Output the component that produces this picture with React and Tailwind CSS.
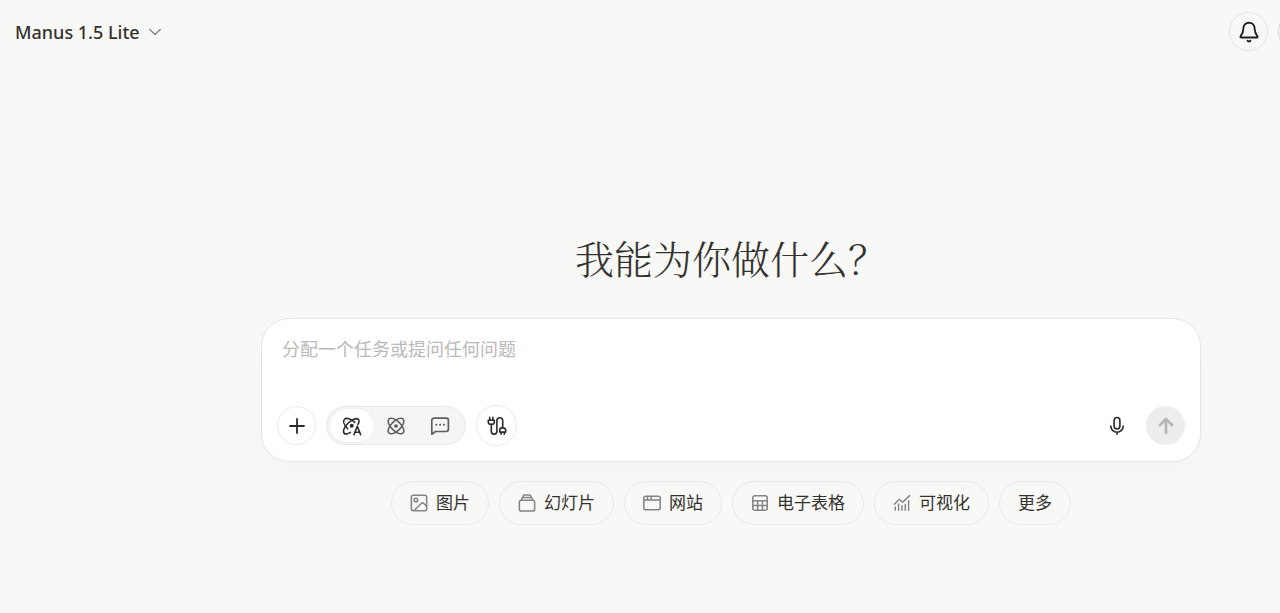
import React from 'react';

function Icon({ children, className = 'size-5', width = 1.5 }) {
  return (
    <svg
      className={className}
      viewBox="0 0 20 20"
      fill="none"
      stroke="currentColor"
      strokeWidth={width}
      strokeLinecap="round"
      strokeLinejoin="round"
      aria-hidden="true"
    >
      {children}
    </svg>
  );
}

const ImageIcon = () => (
  <Icon className="size-[18px]" width={1.7}>
    <rect x="1.5" y="1.5" width="17" height="17" rx="2" />
    <circle cx="6.6" cy="6.8" r="2" />
    <path d="M5 18 12.800 10.300a1.600 1.600 0 0 1 2.200 0l3.400 3.400" />
  </Icon>
);

const SlidesIcon = () => (
  <Icon className="size-[18px]" width={1.7}>
    <rect x="1.500" y="7" width="17" height="12" rx="2.400" />
    <path d="M3.600 6.800 4.300 5c.3-.7.8-1 1.500-1h8.400c.7 0 1.200.3 1.500 1l.7 1.800" />
    <path d="M5.500 3.700 6 2c.2-.7.600-1 1.300-1h5.400c.7 0 1.100.3 1.300 1l.5 1.700" />
  </Icon>
);

const WebsiteIcon = () => (
  <Icon className="size-[18px]" width={1.7}>
    <rect x="0.900" y="2.500" width="18.200" height="15" rx="2" />
    <path d="M1 6.700h18M5 3v3.500M9 3v3.500" />
  </Icon>
);

const SheetIcon = () => (
  <Icon className="size-[18px]" width={1.7}>
    <rect x="2" y="2" width="16" height="16" rx="2.200" />
    <path d="M2 7.500h16M2 12.700h16M7.400 7.500V18M12.700 7.500V18" />
  </Icon>
);

const ChartIcon = () => (
  <Icon className="size-[18px]" width={1.6}>
    <path d="M1.500 11.500 6.500 6.500c.5-.5.8-.5 1.300 0l2.200 2.200c.5.500.8.500 1.300 0L18.500 1.800" />
    <path d="M2.500 14.500v3.500M6.200 11v7M9.900 13v5M13.600 11.500V18M17.300 7.500V18" />
  </Icon>
);

const AtomIcon = () => (
  <Icon>
    <ellipse cx="10" cy="10" rx="10" ry="4.800" transform="rotate(45 10 10)" />
    <ellipse cx="10" cy="10" rx="10" ry="4.800" transform="rotate(-45 10 10)" />
    <circle cx="10" cy="10" r="1.100" fill="currentColor" />
  </Icon>
);

const AtomAgentIcon = () => (
  <Icon width={1.6}>
    <path d="M8.300 16.400c-2.600 1.700-4.900 2.100-6 1-1.900-1.900-.1-6.300 3.700-10.100s8.400-5.800 10.300-3.900c1 1 .8 2.900-.4 5" />
    <path d="M12.800 6.400C9.300 3 4.400 1.300 2.500 3.200c-1.900 1.900-.3 6 3.100 9.600" />
    <circle cx="9.700" cy="9.700" r="1.200" fill="currentColor" />
    <path d="m12 18.600 3.300-8.400 3.300 8.400M13.100 16.200h4.400" />
  </Icon>
);

const ChatIcon = () => (
  <Icon width={1.700}>
    <path d="M4 2.200h12.200A2.200 2.200 0 0 1 18.400 4.400v8.900a2.200 2.200 0 0 1-2.200 2.200H5.500L1.800 18.200V4.400A2.200 2.200 0 0 1 4 2.200Z" />
    <path d="M6.300 8.800h.01M10.100 8.800h.01M13.900 8.800h.01" strokeWidth="2" />
  </Icon>
);

const CableIcon = () => (
  <Icon width={1.600}>
    <path d="M2.700 1.400v2.400M5.900 1.400v2.400M1.300 4.200h6v1.700a2.300 2.300 0 0 1-2.300 2.300H3.600a2.300 2.300 0 0 1-2.300-2.300Z" />
    <path d="M4.300 8.400v6.900a2.800 2.800 0 0 0 5.600 0V4.600a2.900 2.900 0 0 1 5.800 0v7" />
    <path d="M12.700 16.100v-1.900a2.300 2.300 0 0 1 2.300-2.300h1.400a2.300 2.300 0 0 1 2.300 2.300v1.900ZM14.100 16.300v2M17.300 16.300v2" />
  </Icon>
);

const MicIcon = () => (
  <Icon width={1.600}>
    <rect x="7.100" y="1.500" width="5.800" height="11.500" rx="2.900" />
    <path d="M3.800 10a6.200 6.200 0 0 0 12.400 0M10 16.300v2" />
  </Icon>
);

const BellIcon = () => (
  <Icon className="size-[22px]" width={1.700}>
    <path d="M10 1.600c-3.100 0-5.100 2.200-5.100 5.200 0 3.600-.8 4.800-2.600 7.200-.4.600 0 1 .6 1h14.200c.6 0 1-.4.6-1-1.800-2.400-2.600-3.600-2.600-7.200 0-3-2-5.200-5.100-5.200Z" />
    <path d="M8.700 18c.8.700 1.800.7 2.600 0" />
  </Icon>
);

const suggestions = [
  { label: '图片', icon: ImageIcon },
  { label: '幻灯片', icon: SlidesIcon },
  { label: '网站', icon: WebsiteIcon },
  { label: '电子表格', icon: SheetIcon },
  { label: '可视化', icon: ChartIcon },
  { label: '更多' },
];

const modes = [
  { label: '自适应模式', icon: AtomAgentIcon },
  { label: '智能体模式', icon: AtomIcon },
  { label: '聊天模式', icon: ChatIcon },
];

function Header() {
  return (
    <header className="flex items-center justify-between overflow-hidden py-3 pl-[15px]">
      <button type="button" className="flex items-center gap-2 text-lg font-medium text-[#34322d]">
        Manus 1.5 Lite
        <Icon className="size-3.5 text-[#858481]" width={1.9}>
          <path d="m2.500 6.500 7.500 7 7.500-7" />
        </Icon>
      </button>
      <div className="-mr-[37px] flex shrink-0 gap-2.5">
        <button
          type="button"
          aria-label="通知"
          className="flex size-[39px] items-center justify-center rounded-full border border-[#e6e6e5] text-[#222220]"
        >
          <BellIcon />
        </button>
        <button
          type="button"
          aria-label="积分"
          className="size-[39px] rounded-full border border-[#d5d5d3]"
        />
      </div>
    </header>
  );
}

function Composer() {
  const [mode, setMode] = React.useState(0);
  return (
    <form
      onSubmit={(event) => event.preventDefault()}
      className="w-full rounded-[28px] border border-[#e4e4e8] bg-white px-[15px] pt-4 pb-[15px] shadow-[0_12px_32px_0_rgba(0,0,0,0.02)]"
    >
      <textarea
        rows={2}
        aria-label="任务"
        placeholder="分配一个任务或提问任何问题"
        className="block h-[70px] w-full resize-none px-[5px] text-lg/7 text-[#34322d] outline-none placeholder:text-[#b9b9b7]"
      />
      <div className="flex items-center text-[#2c2b28]">
        <button
          type="button"
          aria-label="添加"
          className="flex size-[39px] items-center justify-center rounded-full border border-[#ebebeb]"
        >
          <Icon width={1.800}>
            <path d="M10 3v14M3 10h14" />
          </Icon>
        </button>
        <div className="ml-2.5 flex rounded-full border border-[#e8e8e8] bg-[#f5f5f5] px-[3px] py-0.5">
          {modes.map(({ label, icon: ModeIcon }, index) => (
            <button
              key={label}
              type="button"
              aria-label={label}
              aria-pressed={mode === index}
              onClick={() => setMode(index)}
              className={
                mode === index
                  ? 'flex h-[33px] w-11 items-center justify-center rounded-full bg-white text-[#2c2b28] shadow-[0_0_2px_rgba(0,0,0,0.08)]'
                  : 'flex h-[33px] w-11 items-center justify-center rounded-full text-[#5e5e5b]'
              }
            >
              <ModeIcon />
            </button>
          ))}
        </div>
        <button
          type="button"
          aria-label="连接器"
          className="ml-2.5 flex size-[41px] items-center justify-center rounded-full border border-[#ebebeb]"
        >
          <CableIcon />
        </button>
        <div className="ml-auto flex items-center gap-2.5">
          <button
            type="button"
            aria-label="语音输入"
            className="flex size-[39px] items-center justify-center rounded-full"
          >
            <MicIcon />
          </button>
          <button
            type="submit"
            aria-label="发送"
            className="flex size-[39px] items-center justify-center rounded-full bg-[#ededed] text-[#b4b4b2]"
          >
            <Icon width={2.600}>
              <path d="M10 17V3.500M4 9l6-6 6 6" />
            </Icon>
          </button>
        </div>
      </div>
    </form>
  );
}

export default function App() {
  return (
    <div className="min-h-screen bg-[#f8f8f7] font-['Noto_Sans','Noto_Sans_CJK_SC',sans-serif]">
      <Header />
      <main className="flex flex-col items-center pt-[150px] pr-5 pl-[202px]">
        <div className="flex w-full max-w-[940px] flex-col items-center">
          <h1 className="font-['Noto_Serif_CJK_SC','Noto_Sans_CJK_SC',serif] text-[39px]/[88px] font-light text-[#34322d]">
            我能为你做什么？
          </h1>
          <div className="w-full pt-[17px]">
            <Composer />
          </div>
          <div className="flex flex-wrap justify-center gap-2.5 pt-[19px]">
            {suggestions.map(({ label, icon: ChipIcon }) => (
              <button
                key={label}
                type="button"
                className="flex h-11 items-center gap-2 rounded-full border border-[#e8e8e7] px-[18px] text-[17px]/6 text-[#34322d]"
              >
                {ChipIcon && (
                  <span className="text-[#858481]">
                    <ChipIcon />
                  </span>
                )}
                {label}
              </button>
            ))}
          </div>
        </div>
      </main>
    </div>
  );
}
